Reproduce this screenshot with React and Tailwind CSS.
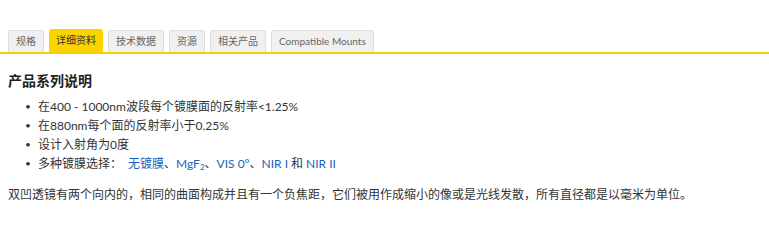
import React from "react";

const tabs = ["规格", "详细资料", "技术数据", "资源", "相关产品", "Compatible Mounts"];

export default function App() {
  return (
    <div className="w-[769px] h-[242px] bg-white text-[#333] font-['Lato','Noto_Sans_CJK_SC',sans-serif]">
      {/* Tabs */}
      <div className="pt-[29px] pl-2 flex items-end gap-[5px] border-b-2 border-[#f5cf00]">
        {tabs.map((t, i) =>
          i === 1 ? (
            <div
              key={t}
              className="h-[23px] px-[7px] flex items-center rounded-t-[3px] bg-[#fbd400] text-[10px] text-[#333]"
            >
              {t}
            </div>
          ) : (
            <div
              key={t}
              className="h-[22px] px-[7px] flex items-center rounded-t-[3px] bg-[#f0f0f0] border border-b-0 border-[#dcdcdc] text-[10px] text-[#666]"
            >
              {t}
            </div>
          )
        )}
      </div>

      {/* Content */}
      <div className="px-2 pt-[17px]">
        <h3 className="text-[14px] font-bold leading-[20px] text-[#222]">产品系列说明</h3>
        <ul className="mt-[6px] pl-[17px] text-[12px] leading-[19px]">
          <li className="flex items-center">
            <span className="w-[13px] text-[10px]">•</span>在400 - 1000nm波段每个镀膜面的反射率&lt;1.25%
          </li>
          <li className="flex items-center">
            <span className="w-[13px] text-[10px]">•</span>在880nm每个面的反射率小于0.25%
          </li>
          <li className="flex items-center">
            <span className="w-[13px] text-[10px]">•</span>设计入射角为0度
          </li>
          <li className="flex items-center">
            <span className="w-[13px] text-[10px]">•</span>多种镀膜选择：
            <span className="ml-[6px] text-[#1a62b8]">无镀膜</span>、
            <span className="text-[#1a62b8]">
              MgF<sub className="text-[8px]">2</sub>
            </span>
            、<span className="text-[#1a62b8]">VIS 0°</span>、
            <span className="text-[#1a62b8]">NIR I</span>
            <span className="mx-[3px]">和</span>
            <span className="text-[#1a62b8]">NIR II</span>
          </li>
        </ul>
        <p className="mt-[12px] text-[12px] leading-[19px]">
          双凹透镜有两个向内的，相同的曲面构成并且有一个负焦距，它们被用作成缩小的像或是光线发散，所有直径都是以毫米为单位。
        </p>
      </div>
    </div>
  );
}
